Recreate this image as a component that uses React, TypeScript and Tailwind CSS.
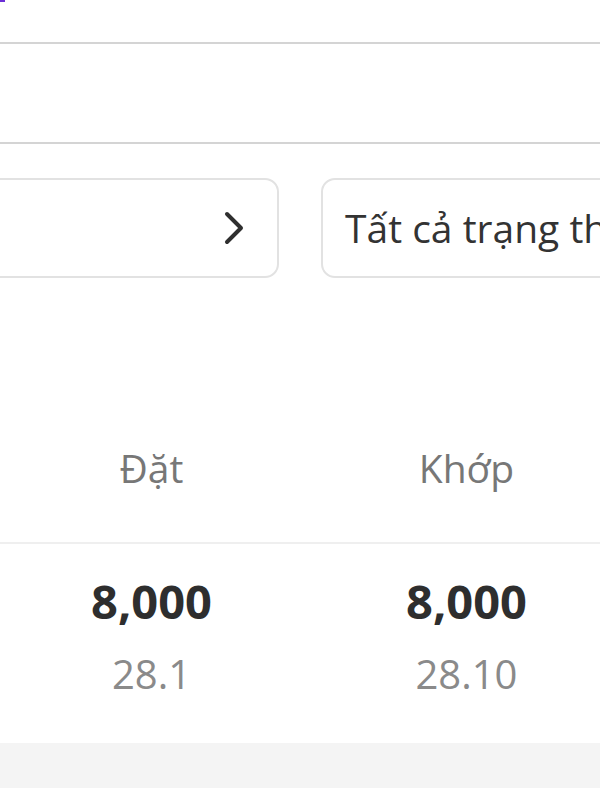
import React from 'react';

const font = { fontFamily: '"Open Sans", "Noto Sans", sans-serif' };

function ChevronRight() {
  return (
    <svg width="22" height="34" viewBox="0 0 22 34" fill="none">
      <path d="M4 3 L18 17 L4 31" stroke="#2f2f2f" strokeWidth="4" strokeLinecap="round" strokeLinejoin="round" />
    </svg>
  );
}

const columns = [
  { label: 'Đặt', qty: '8,000', price: '28.1' },
  { label: 'Khớp', qty: '8,000', price: '28.10' },
];

export default function App() {
  return (
    <div className="w-[600px] h-[800px] bg-white overflow-hidden flex flex-col font-['Open_Sans',sans-serif]">
      {/* Top bar */}
      <div className="h-[44px] flex-shrink-0 border-b-2 border-[#d4d4d4] relative">
        <div className="absolute left-0 top-0 w-[5px] h-[2px] bg-[#6b2fd6]" />
      </div>

      {/* Blank section */}
      <div className="h-[100px] flex-shrink-0 border-b-2 border-[#d4d4d4]" />

      {/* Filters */}
      <div className="flex-shrink-0 flex gap-[42px] pt-[34px] overflow-hidden">
        <div className="-ml-[30px] w-[309px] h-[100px] flex-shrink-0 rounded-[14px] border-2 border-[#e2e2e2] flex items-center justify-end pr-[32px]">
          <ChevronRight />
        </div>
        <div className="w-[320px] h-[100px] flex-shrink-0 rounded-[14px] border-2 border-[#e2e2e2] flex items-center pl-[22px] whitespace-nowrap overflow-hidden">
          <span className="text-[39px] text-[#333333]" style={font}>Tất cả trạng thái</span>
        </div>
      </div>

      {/* Table header */}
      <div className="flex-shrink-0 h-[266px] flex items-end border-b-2 border-[#efefef] overflow-hidden">
        <div className="flex -ml-[6px] pb-[52px]">
          {columns.map((c) => (
            <div key={c.label} className="w-[315px] flex-shrink-0 text-center text-[39px] leading-[44px] text-[#777777]" style={font}>
              {c.label}
            </div>
          ))}
        </div>
      </div>

      {/* Row */}
      <div className="flex-shrink-0 h-[199px] flex -ml-[6px] pt-[30px]">
        {columns.map((c) => (
          <div key={c.label} className="w-[315px] flex-shrink-0 flex flex-col items-center" style={font}>
            <div className="text-[47px] leading-[54px] font-bold text-[#2e2e2e]">{c.qty}</div>
            <div className="mt-[22px] text-[40px] leading-[48px] text-[#8a8a8a]">{c.price}</div>
          </div>
        ))}
      </div>

      {/* Separator band */}
      <div className="h-[45px] flex-shrink-0 bg-[#f4f4f4]" />
      <div className="flex-1 bg-white" />
    </div>
  );
}
